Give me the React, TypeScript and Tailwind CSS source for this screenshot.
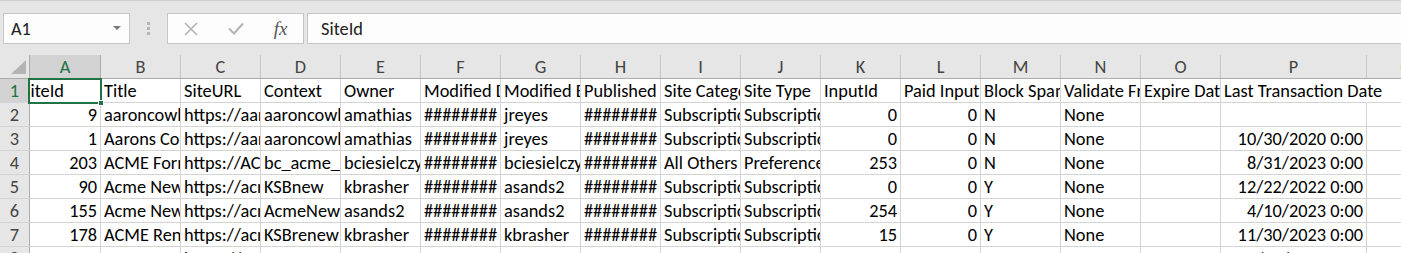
const cols = [
  { key: "A", w: "w-[71px]" },
  { key: "B", w: "w-[80px]" },
  { key: "C", w: "w-[80px]" },
  { key: "D", w: "w-[80px]" },
  { key: "E", w: "w-[80px]" },
  { key: "F", w: "w-[80px]" },
  { key: "G", w: "w-[80px]" },
  { key: "H", w: "w-[80px]" },
  { key: "I", w: "w-[80px]" },
  { key: "J", w: "w-[80px]" },
  { key: "K", w: "w-[80px]" },
  { key: "L", w: "w-[80px]" },
  { key: "M", w: "w-[80px]" },
  { key: "N", w: "w-[80px]" },
  { key: "O", w: "w-[80px]" },
  { key: "P", w: "w-[146px]" },
  { key: "Q", w: "w-[80px]" },
];

// r = right aligned, c = centered (the #### fill), default left
const align: Record<string, string> = {
  A: "r",
  F: "c",
  H: "c",
  K: "r",
  L: "r",
  P: "r",
};

const header = [
  "SiteId",
  "Title",
  "SiteURL",
  "Context",
  "Owner",
  "Modified Date",
  "Modified By",
  "Published Date",
  "Site Category",
  "Site Type",
  "InputId",
  "Paid InputId",
  "Block Spam",
  "Validate From",
  "Expire Date",
  "Last Transaction Date",
  "",
];

const rows: string[][] = [
  ["9", "aaroncowles", "https://aaroncowles.com", "aaroncowles", "amathias", "########", "jreyes", "########", "Subscription", "Subscription", "0", "0", "N", "None", "", "", ""],
  ["1", "Aarons Company", "https://aaronscompany.com", "aaroncowles", "amathias", "########", "jreyes", "########", "Subscription", "Subscription", "0", "0", "N", "None", "", "10/30/2020 0:00", ""],
  ["203", "ACME Forms", "https://ACME.com", "bc_acme_forms", "bciesielczyk", "########", "bciesielczyk", "########", "All Others", "Preference", "253", "0", "N", "None", "", "8/31/2023 0:00", ""],
  ["90", "Acme Newsletter", "https://acme.com", "KSBnew", "kbrasher", "########", "asands2", "########", "Subscription", "Subscription", "0", "0", "Y", "None", "", "12/22/2022 0:00", ""],
  ["155", "Acme Newsletter", "https://acme.com", "AcmeNewsletter", "asands2", "########", "asands2", "########", "Subscription", "Subscription", "254", "0", "Y", "None", "", "4/10/2023 0:00", ""],
  ["178", "ACME Renewal", "https://acme.com", "KSBrenew", "kbrasher", "########", "kbrasher", "########", "Subscription", "Subscription", "15", "0", "Y", "None", "", "11/30/2023 0:00", ""],
  ["", "", "https://acme.com", "", "", "", "", "", "", "", "", "", "", "", "", "1/11/2023 0:00", ""],
];

function alignClass(key: string) {
  const a = align[key];
  if (a === "r") return "justify-end pr-[3px]";
  if (a === "c") return "justify-center";
  return "justify-start pl-[3px]";
}

function Cell({
  col,
  text,
  left,
  spill,
}: {
  col: (typeof cols)[number];
  text: string;
  left?: boolean;
  spill?: boolean;
}) {
  return (
    <div
      className={`${col.w} shrink-0 h-full flex items-end pb-[1px] whitespace-nowrap ${
        spill ? "relative z-10 overflow-visible border-r border-r-transparent" : "overflow-hidden border-r border-[#d4d4d4]"
      } ${left ? "justify-start pl-[3px]" : alignClass(col.key)}`}
    >
      {text}
    </div>
  );
}

export default function App() {
  return (
    <div className="w-[1401px] h-[253px] overflow-hidden bg-[#e6e6e6] text-[18.33px] leading-[20px] text-black font-['Calibri','Carlito','Open_Sans',sans-serif]">
      {/* Formula bar */}
      <div className="h-[55px] border-t border-[#cfcfcf] pt-[12px] flex items-start">
        <div className="ml-[3px] w-[127px] h-[31px] bg-[#fdfdfd] border border-[#c6c6c6] flex items-center pl-[7px] pr-[8px]">
          <span className="flex-1 text-[#222]">A1</span>
          <svg width="8" height="5" viewBox="0 0 8 5">
            <path d="M0 0 L8 0 L4 4 Z" fill="#7a7a7a" />
          </svg>
        </div>
        <div className="w-[37px] h-[31px] flex flex-col items-center justify-center gap-[2px]">
          <div className="w-[3px] h-[3px] bg-[#b6b6b6]" />
          <div className="w-[3px] h-[3px] bg-[#b6b6b6]" />
          <div className="w-[3px] h-[3px] bg-[#b6b6b6]" />
        </div>
        <div className="w-[137px] h-[31px] bg-[#fdfdfd] border border-[#c6c6c6] flex items-center">
          <div className="w-[45px] flex justify-center pl-[1px]">
            <svg width="14" height="14" viewBox="0 0 14 14">
              <path d="M1 1 L13 13 M13 1 L1 13" stroke="#b3b3b3" strokeWidth="1.6" fill="none" />
            </svg>
          </div>
          <div className="w-[45px] flex justify-center">
            <svg width="16" height="13" viewBox="0 0 16 13">
              <path d="M1 6.5 L6 11.5 L15 1.5" stroke="#b3b3b3" strokeWidth="2" fill="none" />
            </svg>
          </div>
          <div className="w-[45px] flex justify-center">
            <span className="italic text-[19px] text-[#555] font-['Liberation_Serif',serif]">fx</span>
          </div>
        </div>
        <div className="ml-[3px] flex-1 h-[31px] bg-[#fdfdfd] border border-r-0 border-[#c6c6c6] flex items-center pl-[13px] text-[#222]">
          SiteId
        </div>
      </div>

      {/* Column headers */}
      <div className="h-[24px] flex border-b border-[#ababab]">
        <div className="w-[30px] shrink-0 h-full border-r border-[#ababab] relative">
          <svg className="absolute right-[3px] bottom-[4px]" width="15" height="14" viewBox="0 0 15 14">
            <path d="M15 0 L15 14 L0 14 Z" fill="#b4b4b4" />
          </svg>
        </div>
        {cols.map((c) => (
          <div
            key={c.key}
            className={`${c.w} shrink-0 h-full flex items-center justify-center border-r ${
              c.key === "A" ? "bg-[#d2d2d2] text-[#217346] border-[#ababab]" : "text-[#444] border-[#c6c6c6]"
            }`}
          >
            {c.key}
          </div>
        ))}
      </div>

      {/* Data rows */}
      <div className="bg-white">
        <div className="h-[24px] flex border-b border-[#d4d4d4]">
          <div className="w-[30px] shrink-0 h-full bg-[#d2d2d2] text-[#217346] border-r border-[#ababab] flex items-center justify-center">
            1
          </div>
          <div className="w-[71px] shrink-0 h-full border-r border-[#d4d4d4] relative">
            <div className="h-full overflow-hidden whitespace-nowrap flex items-end pb-[1px]">
              <span className="ml-[-8px]">SiteId</span>
            </div>
            <div className="absolute left-[-2px] top-[-1px] right-[-2px] bottom-[-2px] border-2 border-[#217346]" />
            <div className="absolute right-[-4px] bottom-[-4px] w-[6px] h-[6px] bg-[#217346] border border-white" />
          </div>
          {cols.slice(1).map((c, i) => (
            <Cell key={c.key} col={c} text={header[i + 1]} left spill={c.key === "P"} />
          ))}
        </div>
        {rows.map((r, ri) => (
          <div key={ri} className="h-[24px] flex border-b border-[#d4d4d4]">
            <div className="w-[30px] shrink-0 h-full bg-[#e6e6e6] text-[#444] border-r border-[#ababab] flex items-center justify-center">
              {ri + 2}
            </div>
            {cols.map((c, ci) => (
              <Cell key={c.key} col={c} text={r[ci]} />
            ))}
          </div>
        ))}
      </div>
    </div>
  );
}
